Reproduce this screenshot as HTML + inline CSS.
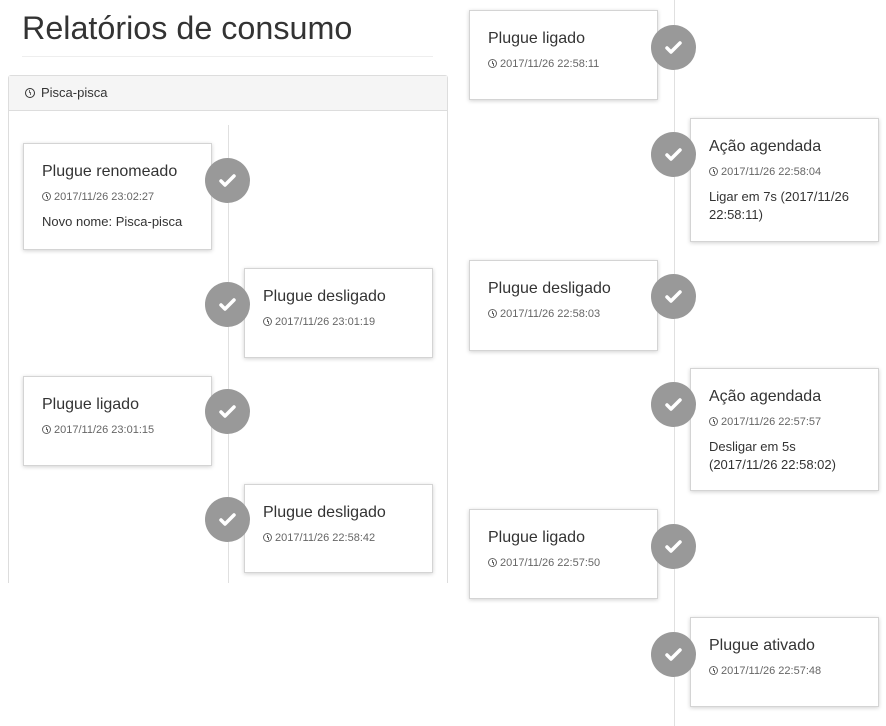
<!DOCTYPE html><html><head><style>
body{margin:0;width:886px;height:726px;overflow:hidden;background:#fff;font-family:"Liberation Sans",sans-serif;color:#333;position:relative}
.a{position:absolute}
h1{position:absolute;left:22px;top:10px;margin:0;font-size:32.3px;font-weight:normal;color:#333}
.card{position:absolute;width:189px;background:#fff;border:1px solid #d4d4d4;box-shadow:0 1px 4px rgba(0,0,0,.18);box-sizing:border-box;padding:18px 18px 0 18px}
.card .t{font-size:16px;color:#333;margin-top:0;line-height:20px}
.card .d{font-size:11px;color:#666;margin-top:8px;line-height:14px}
.card .x{font-size:13px;color:#333;margin-top:9px;line-height:18px}
.c{position:absolute;width:45px;height:45px;border-radius:50%;background:#999;}
.c svg{position:absolute;left:14px;top:15px}
.clk{display:inline-block;width:7px;height:7px;border:1.4px solid #666;border-radius:50%;position:relative;vertical-align:-1px;margin-right:3px}
.clk:after{content:"";position:absolute;left:3px;top:1px;width:1px;height:3px;background:#666;box-shadow:1px 2px 0 #666}
</style></head><body>
<h1>Relatórios de consumo</h1>
<div class="a" style="left:22px;top:56px;width:411px;height:1px;background:#eee"></div>
<div class="a" style="left:8px;top:75px;width:438px;height:520px;border:1px solid #ddd;border-bottom:none;border-radius:3px 3px 0 0"></div>
<div class="a" style="left:9px;top:76px;width:438px;height:35px;background:#f5f5f5;border-bottom:1px solid #ddd;font-size:13px;line-height:34px;padding-left:16px;box-sizing:border-box"><span class="clk" style="border-color:#333;width:8px;height:8px;margin-right:6px"></span>Pisca-pisca</div>
<div class="a" style="left:0;top:583px;width:460px;height:143px;background:#fff"></div>
<div class="a" style="left:228px;top:125px;width:1px;height:458px;background:#e0e0e0"></div>
<div class="a" style="left:674px;top:0;width:1px;height:726px;background:#e0e0e0"></div>

<div class="card" style="left:23px;top:143px;height:107px"><div class="t">Plugue renomeado</div><div class="d"><span class="clk"></span>2017/11/26 23:02:27</div><div class="x">Novo nome: Pisca-pisca</div></div>
<div class="card" style="left:244px;top:268px;height:90px"><div class="t">Plugue desligado</div><div class="d"><span class="clk"></span>2017/11/26 23:01:19</div></div>
<div class="card" style="left:23px;top:376px;height:90px"><div class="t">Plugue ligado</div><div class="d"><span class="clk"></span>2017/11/26 23:01:15</div></div>
<div class="card" style="left:244px;top:484px;height:89px"><div class="t">Plugue desligado</div><div class="d"><span class="clk"></span>2017/11/26 22:58:42</div></div>

<div class="card" style="left:469px;top:10px;height:90px"><div class="t">Plugue ligado</div><div class="d"><span class="clk"></span>2017/11/26 22:58:11</div></div>
<div class="card" style="left:690px;top:118px;height:124px"><div class="t">Ação agendada</div><div class="d"><span class="clk"></span>2017/11/26 22:58:04</div><div class="x">Ligar em 7s (2017/11/26 22:58:11)</div></div>
<div class="card" style="left:469px;top:260px;height:91px"><div class="t">Plugue desligado</div><div class="d"><span class="clk"></span>2017/11/26 22:58:03</div></div>
<div class="card" style="left:690px;top:368px;height:123px"><div class="t">Ação agendada</div><div class="d"><span class="clk"></span>2017/11/26 22:57:57</div><div class="x">Desligar em 5s (2017/11/26 22:58:02)</div></div>
<div class="card" style="left:469px;top:509px;height:90px"><div class="t">Plugue ligado</div><div class="d"><span class="clk"></span>2017/11/26 22:57:50</div></div>
<div class="card" style="left:690px;top:617px;height:90px"><div class="t">Plugue ativado</div><div class="d"><span class="clk"></span>2017/11/26 22:57:48</div></div>

<svg width="0" height="0" style="position:absolute"><defs><path id="k" d="M2 8 L6 12 L15 3" fill="none" stroke="#fff" stroke-width="3.5" stroke-linecap="round" stroke-linejoin="round"/></defs></svg>
<div class="c" style="left:205px;top:158px"><svg width="17" height="15"><use href="#k"/></svg></div>
<div class="c" style="left:205px;top:282px"><svg width="17" height="15"><use href="#k"/></svg></div>
<div class="c" style="left:205px;top:389px"><svg width="17" height="15"><use href="#k"/></svg></div>
<div class="c" style="left:205px;top:497px"><svg width="17" height="15"><use href="#k"/></svg></div>
<div class="c" style="left:651px;top:25px"><svg width="17" height="15"><use href="#k"/></svg></div>
<div class="c" style="left:651px;top:132px"><svg width="17" height="15"><use href="#k"/></svg></div>
<div class="c" style="left:651px;top:274px"><svg width="17" height="15"><use href="#k"/></svg></div>
<div class="c" style="left:651px;top:382px"><svg width="17" height="15"><use href="#k"/></svg></div>
<div class="c" style="left:651px;top:524px"><svg width="17" height="15"><use href="#k"/></svg></div>
<div class="c" style="left:651px;top:632px"><svg width="17" height="15"><use href="#k"/></svg></div>
</body></html>
